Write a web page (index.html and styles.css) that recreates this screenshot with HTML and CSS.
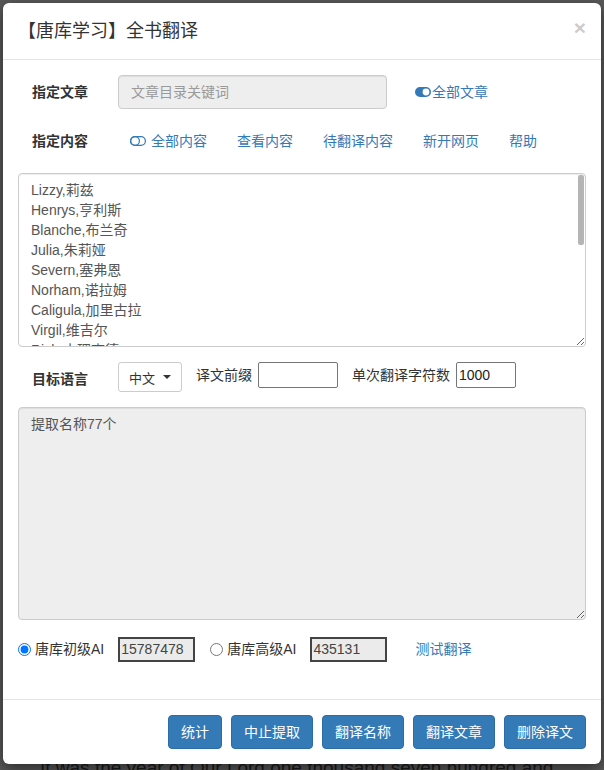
FILE: index.html
```html
<!DOCTYPE html>
<html lang="zh-CN">
<head>
<meta charset="utf-8">
<title>全书翻译</title>
<link rel="stylesheet" href="styles.css">
</head>
<body>
<div class="page-behind">
  <p class="behind-text">It was the year of Our Lord one thousand seven hundred and</p>
</div>
<div class="modal">
  <div class="modal-header">
    <h4 class="modal-title">【唐库学习】全书翻译</h4>
    <span class="close">×</span>
  </div>
  <div class="modal-body">
    <div class="row row-1">
      <label class="row-label">指定文章</label>
      <input class="form-input" type="text" placeholder="文章目录关键词" disabled>
      <a class="btn-link link-all-articles"><svg class="toggle" width="16" height="10" viewBox="0 0 16 10"><path fill="#337ab7" fill-rule="evenodd" d="M5 0h6a5 5 0 0 1 0 10H5A5 5 0 0 1 5 0z M11 1.6a3.4 3.4 0 1 0 0 6.8a3.4 3.4 0 1 0 0-6.8z"/></svg>全部文章</a>
    </div>
    <div class="row row-2">
      <label class="row-label">指定内容</label>
      <div class="links">
        <a class="btn-link"><svg class="toggle toggle-off" width="16" height="10" viewBox="0 0 16 10"><rect x="0.6" y="0.6" width="14.8" height="8.8" rx="4.4" fill="none" stroke="#337ab7" stroke-width="1.2"/><circle cx="5" cy="5" r="4.4" fill="none" stroke="#337ab7" stroke-width="1.2"/></svg>全部内容</a>
        <a class="btn-link">查看内容</a>
        <a class="btn-link">待翻译内容</a>
        <a class="btn-link">新开网页</a>
        <a class="btn-link">帮助</a>
      </div>
    </div>
    <div class="names-wrap">
      <textarea class="names-area">Lizzy,莉兹
Henrys,亨利斯
Blanche,布兰奇
Julia,朱莉娅
Severn,塞弗恩
Norham,诺拉姆
Caligula,加里古拉
Virgil,维吉尔
Rich,小理查德
Thomas,托马斯
Edward,爱德华
Margaret,玛格丽特
Catherine,凯瑟琳
William,威廉
Charlotte,夏洛特
Arthur,亚瑟
Eleanor,埃莉诺
George,乔治
Harriet,哈丽特
Lucius,卢修斯</textarea>
      <span class="scroll-thumb"></span>
    </div>
    <div class="row row-3">
      <label class="row-label label-lang">目标语言</label>
      <button class="btn-select">中文<span class="caret"></span></button>
      <span class="inline-label">译文前缀</span>
      <input class="plain-input prefix-input" type="text">
      <span class="inline-label">单次翻译字符数</span>
      <input class="plain-input count-input" type="text" value="1000">
    </div>
    <textarea class="output-area" readonly>提取名称77个</textarea>
    <div class="row row-4">
      <label class="radio-item"><input type="radio" name="ai" checked><span>唐库初级AI</span></label>
      <input class="ro-input" type="text" value="15787478" readonly>
      <label class="radio-item radio-second"><input type="radio" name="ai"><span>唐库高级AI</span></label>
      <input class="ro-input" type="text" value="435131" readonly>
      <a class="btn-link test-link">测试翻译</a>
    </div>
  </div>
  <div class="modal-footer">
    <button class="btn-primary">统计</button>
    <button class="btn-primary">中止提取</button>
    <button class="btn-primary">翻译名称</button>
    <button class="btn-primary">翻译文章</button>
    <button class="btn-primary">删除译文</button>
  </div>
</div>
</body>
</html>
```
FILE: styles.css
```css
* { box-sizing: border-box; }

html, body {
  margin: 0;
  padding: 0;
  width: 604px;
  height: 770px;
  overflow: hidden;
}

body {
  background: #595959;
  font-family: "Liberation Sans", "Noto Sans CJK SC", sans-serif;
  font-size: 14px;
  line-height: 20px;
  color: #333;
  position: relative;
}

.page-behind {
  height: 770px;
  padding-top: 757px;
  padding-left: 40px;
}

.behind-text {
  margin: 0;
  font-size: 19px;
  line-height: 22px;
  color: #1c1c1c;
  white-space: nowrap;
}

.modal {
  position: absolute;
  left: 3px;
  top: 3px;
  width: 598px;
  background: #fff;
  border-radius: 6px;
  box-shadow: 0 5px 15px rgba(0, 0, 0, 0.5);
}

.modal-header {
  position: relative;
  padding: 15px;
  border-bottom: 1px solid #e5e5e5;
}

.modal-title {
  margin: 0;
  font-size: 18px;
  line-height: 26px;
  font-weight: normal;
  color: #333;
}

.close {
  position: absolute;
  right: 15px;
  top: 14px;
  font-size: 21px;
  font-weight: bold;
  line-height: 21px;
  color: #000;
  opacity: 0.2;
}

.modal-body {
  padding: 15px 15px 36px;
}

.row {
  display: flex;
  margin-bottom: 15px;
}

.row-label {
  width: 100px;
  padding-left: 14px;
  font-weight: bold;
  color: #333;
  flex: none;
}

.row-1, .row-2 {
  align-items: center;
  height: 34px;
}

.form-input {
  width: 269px;
  height: 34px;
  padding: 6px 12px;
  font: inherit;
  font-size: 14px;
  color: #555;
  background: #eee;
  border: 1px solid #ccc;
  border-radius: 4px;
  box-shadow: inset 0 1px 1px rgba(0, 0, 0, 0.075);
}

.form-input::placeholder {
  color: #999;
}

.btn-link {
  display: inline-flex;
  align-items: center;
  height: 34px;
  padding: 6px 12px;
  color: #337ab7;
  text-decoration: none;
  white-space: nowrap;
}

.link-all-articles {
  margin-left: 16px;
}

.toggle {
  flex: none;
  margin-right: 1px;
}

.toggle-off {
  margin-right: 5px;
}

.links {
  display: flex;
  align-items: center;
  gap: 6px;
}

.names-wrap {
  position: relative;
  margin-bottom: 15px;
}

.names-area,
.output-area {
  display: block;
  width: 568px;
  padding: 6px 12px;
  font: inherit;
  font-size: 14px;
  line-height: 20px;
  color: #555;
  border: 1px solid #ccc;
  border-radius: 4px;
  box-shadow: inset 0 1px 1px rgba(0, 0, 0, 0.075);
  margin: 0;
  resize: vertical;
}

.names-area {
  height: 174px;
  background: #fff;
  overflow: hidden;
}

.scroll-thumb {
  position: absolute;
  right: 2px;
  top: 2px;
  width: 6px;
  height: 70px;
  background: #b5b5b5;
  border-radius: 2px;
}

.output-area {
  height: 213px;
  background: #eee;
  margin-bottom: 15px;
}

.row-3 {
  align-items: flex-start;
  height: 30px;
}

.label-lang {
  padding-top: 7px;
}

.btn-select {
  display: flex;
  align-items: center;
  width: 64px;
  height: 30px;
  padding: 0 0 0 10px;
  font-family: inherit;
  font-size: 13px;
  color: #333;
  white-space: nowrap;
  background: #fff;
  border: 1px solid #ccc;
  border-radius: 3px;
  margin-right: 14px;
}

.caret {
  display: inline-block;
  flex: none;
  width: 0;
  height: 0;
  margin-left: 8px;
  border-top: 4px solid #333;
  border-left: 4px solid transparent;
  border-right: 4px solid transparent;
}

.inline-label {
  line-height: 26px;
  color: #333;
  margin-right: 6px;
}

.plain-input {
  height: 26px;
  padding: 1px 2px;
  font: inherit;
  font-size: 14px;
  color: #222;
  border: 1px solid #767676;
  border-radius: 2px;
  background: #fff;
}

.prefix-input {
  width: 80px;
  margin-right: 14px;
}

.count-input {
  width: 60px;
}

.row-4 {
  align-items: center;
  height: 28px;
  margin-bottom: 0;
}

.radio-item {
  display: flex;
  align-items: center;
  color: #333;
  margin-right: 14px;
}

.radio-item input {
  margin: 0 4px 0 0;
  width: 13px;
  height: 13px;
}

.radio-second {
  margin-left: 15px;
}

.ro-input {
  width: 77px;
  height: 25px;
  padding: 0 1px;
  font: inherit;
  font-size: 14px;
  color: #444;
  background: #ebebeb;
  border: 2px solid #444;
}

.test-link {
  margin-left: 16px;
}

.modal-footer {
  display: flex;
  justify-content: flex-end;
  gap: 9px;
  padding: 15px;
  border-top: 1px solid #e5e5e5;
}

.btn-primary {
  height: 34px;
  padding: 6px 12px;
  font-family: inherit;
  font-size: 14px;
  line-height: 20px;
  color: #fff;
  background: #337ab7;
  border: 1px solid #2e6da4;
  border-radius: 4px;
}
```
